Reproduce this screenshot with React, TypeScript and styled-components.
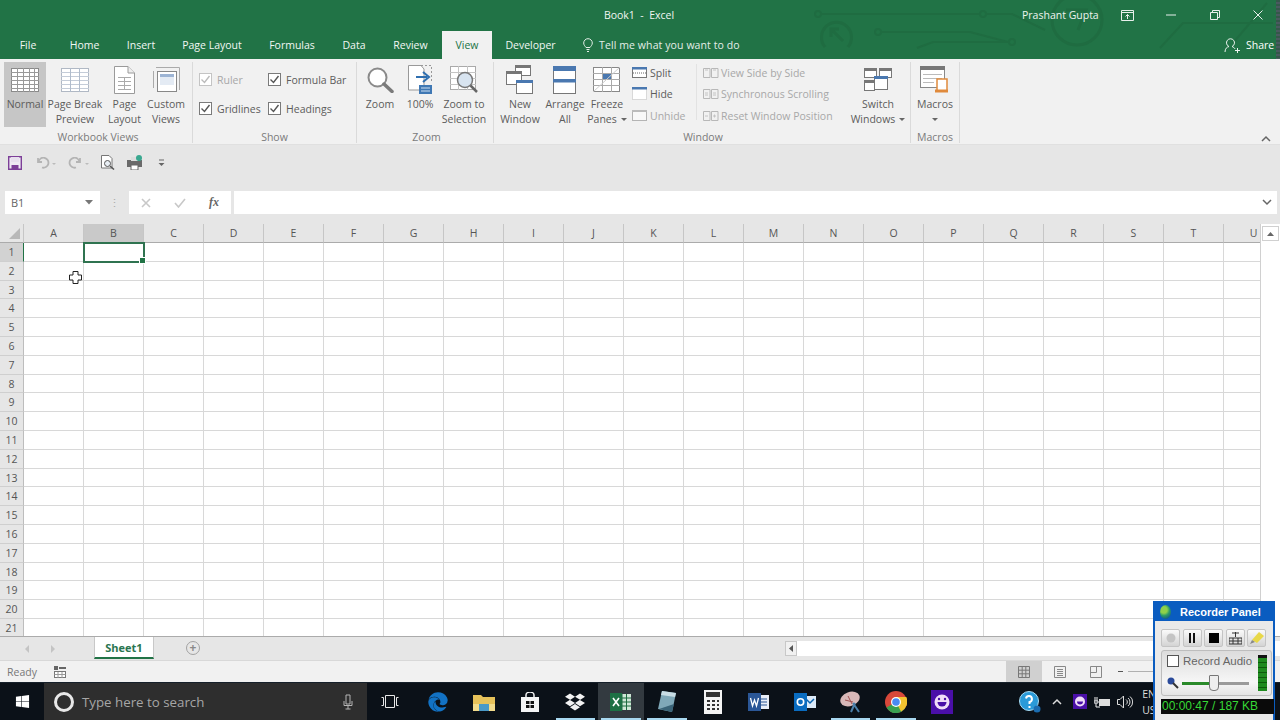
import * as React from "react"
import styled, { createGlobalStyle } from 'styled-components'
import { FaWindows, FaDropbox, FaEdge } from 'react-icons/fa'

const GlobalStyle = createGlobalStyle`
    html, body { margin: 0; padding: 0; background: #fff; }
    body { font-family: "Open Sans", "Noto Sans", "Liberation Sans", sans-serif; color: #444; }
    * { box-sizing: border-box; }
`

const Page = styled.div`
    position: relative;
    width: 1280px;
    height: 720px;
    overflow: hidden;
    display: flex;
    flex-direction: column;
`

/* ---------- title bar ---------- */
const GreenBar = styled.header`
    position: relative;
    height: 59px;
    background: #217346;
    color: #fff;
    font-size: 10.5px;
`
const Circuit = styled.svg`
    position: absolute;
    left: 0;
    top: 0;
`
const TitleRow = styled.div`
    position: relative;
    height: 31px;
    padding-bottom: 1px;
    display: flex;
    align-items: center;
`
const DocTitle = styled.div`
    width: 1278px;
    text-align: center;
    color: #f0f5f2;
    white-space: pre;
`
const UserName = styled.div`
    position: absolute;
    left: 1022px;
    top: 8px;
    color: #eef4f0;
`
const WindowControls = styled.div`
    position: absolute;
    left: 1106px;
    top: 0;
    height: 30px;
    display: flex;
`
const WindowControl = styled.div`
    width: 43.5px;
    height: 30px;
    display: flex;
    align-items: center;
    justify-content: center;
`
const TabRow = styled.nav`
    position: relative;
    height: 28px;
    display: flex;
`
const Tab = styled.div<{ $w: number; $active?: boolean }>`
    width: ${p => p.$w}px;
    height: 28px;
    padding-top: 7px;
    text-align: center;
    color: ${p => (p.$active ? '#217346' : '#f2f7f4')};
    background: ${p => (p.$active ? '#f1f1f1' : 'transparent')};
`
const TellMe = styled.div`
    margin-left: 14px;
    padding-top: 7px;
    display: flex;
    align-items: flex-start;
    gap: 6px;
    color: #e4eee8;
    letter-spacing: .1px;
`
const Share = styled.div`
    position: absolute;
    left: 1224px;
    top: 6px;
    display: flex;
    align-items: center;
    gap: 6px;
`
const EdgeNoise = styled.div`
    position: absolute;
    right: 0;
    top: 0;
    width: 4px;
    height: 59px;
    background: repeating-linear-gradient(180deg, #34584a 0 2px, #4a5a60 2px 4px);
`

/* ---------- ribbon ---------- */
const Ribbon = styled.section`
    position: relative;
    height: 86px;
    background: #f1f1f1;
    display: flex;
    border-bottom: 1px solid #e0e0e0;
`
const Group = styled.div<{ $w: number; $pad?: number }>`
    width: ${p => p.$w}px;
    height: 81px;
    margin-top: 3px;
    padding-left: ${p => p.$pad ?? 0}px;
    border-right: 1px solid #dadada;
    display: flex;
    flex-direction: column;
`
const GroupBody = styled.div`
    flex: none;
    height: 65px;
    display: flex;
`
const GroupLabel = styled.div`
    margin-top: 4px;
    font-size: 10.5px;
    line-height: 12px;
    text-align: center;
    color: #7b7b7b;
`
const BigButton = styled.div<{ $w: number; $on?: boolean }>`
    width: ${p => p.$w}px;
    height: 65px;
    background: ${p => (p.$on ? '#c6c6c6' : 'transparent')};
    display: flex;
    flex-direction: column;
    align-items: center;
    font-size: 10.5px;
    line-height: 15px;
    text-align: center;
    color: #5c5c5c;
    white-space: pre;
`
const BigIcon = styled.div`
    height: 35px;
    display: flex;
    align-items: center;
    justify-content: center;
`
const Caret = styled.span`
    display: inline-block;
    width: 0;
    height: 0;
    margin-left: 4px;
    vertical-align: 2px;
    border-left: 3px solid transparent;
    border-right: 3px solid transparent;
    border-top: 3px solid #666;
`
const LoneCaret = styled(Caret)`
    margin: 6px 0 0;
`
const CheckGrid = styled.div`
    display: grid;
    grid-template-columns: 69px 88px;
    grid-auto-rows: 29px;
    padding: 3px 0 0 6px;
`
const CheckItem = styled.div<{ $off?: boolean }>`
    display: flex;
    align-items: center;
    gap: 5px;
    font-size: 10.5px;
    color: ${p => (p.$off ? '#a8a8a8' : '#5c5c5c')};
    white-space: nowrap;
`
const Check = styled.span<{ $off?: boolean }>`
    width: 13px;
    height: 13px;
    flex: none;
    background: #fff;
    border: 1px solid ${p => (p.$off ? '#c4c4c4' : '#7a7a7a')};
    display: flex;
    align-items: center;
    justify-content: center;
`
const SmallColumn = styled.div<{ $w: number; $ml?: number }>`
    width: ${p => p.$w}px;
    margin-left: ${p => p.$ml ?? 0}px;
    display: flex;
    flex-direction: column;
`
const SmallItem = styled.div<{ $off?: boolean }>`
    height: 21.5px;
    display: flex;
    align-items: center;
    gap: 2px;
    font-size: 10.5px;
    color: ${p => (p.$off ? '#a8a8a8' : '#5c5c5c')};
    white-space: nowrap;
`
const SoftRule = styled.div`
    width: 1px;
    height: 56px;
    margin-top: 2px;
    background: #e2e2e2;
`
const Collapse = styled.svg`
    position: absolute;
    left: 1261px;
    top: 76px;
`

/* ---------- quick access and formula bar ---------- */
const QuickAccess = styled.div`
    height: 35px;
    background: #e6e6e6;
    display: flex;
    align-items: center;
    padding-left: 8px;
`
const QuickSlot = styled.div<{ $w: number }>`
    width: ${p => p.$w}px;
    display: flex;
    align-items: center;
`
const FormulaRow = styled.div`
    height: 44px;
    background: #e6e6e6;
    display: flex;
    padding: 11px 3px 10px 5px;
`
const NameBox = styled.div`
    width: 95px;
    background: #fff;
    display: flex;
    align-items: center;
    justify-content: space-between;
    padding: 0 7px 0 6px;
    font-size: 11px;
    color: #666;
`
const GripDots = styled.div`
    width: 29px;
    display: flex;
    justify-content: center;
    align-items: center;
    color: #aaa;
    font-size: 11px;
`
const FxBox = styled.div`
    width: 102px;
    background: #fff;
    display: flex;
    align-items: center;
    justify-content: space-between;
    padding: 0 12px;
`
const FxLabel = styled.span`
    font-family: "Liberation Serif", serif;
    font-style: italic;
    font-weight: bold;
    font-size: 12px;
    color: #666;
`
const FormulaInput = styled.div`
    flex: 1;
    margin-left: 3px;
    background: #fff;
    display: flex;
    align-items: center;
    justify-content: flex-end;
    padding-right: 5px;
`

/* ---------- sheet ---------- */
const SheetArea = styled.div`
    height: 412px;
    display: flex;
    background: #fff;
`
const SheetGrid = styled.div`
    width: 1260px;
    height: 412px;
    overflow: hidden;
    display: grid;
    grid-template-columns: 24px repeat(21, 60px);
    grid-template-rows: 19px repeat(21, 18.8px);
`
const Corner = styled.div`
    background: #e6e6e6;
    border-right: 1px solid #c6c6c6;
    border-bottom: 1px solid #ababab;
    display: flex;
    align-items: flex-end;
    justify-content: flex-end;
    padding: 0 3px 3px 0;
`
const ColHead = styled.div<{ $on?: boolean }>`
    background: ${p => (p.$on ? '#c9c9c9' : '#e6e6e6')};
    border-right: 1px solid #c6c6c6;
    border-bottom: 1px solid #ababab;
    font-size: 10.5px;
    line-height: 18px;
    text-align: center;
    color: #555;
`
const RowHead = styled.div<{ $on?: boolean }>`
    background: ${p => (p.$on ? '#d2d2d2' : '#e6e6e6')};
    border-right: ${p => (p.$on ? '1px solid #217346' : '1px solid #bdbdbd')};
    border-bottom: 1px solid #cfcfcf;
    font-size: 10.5px;
    text-align: center;
    line-height: 18.5px;
    color: #555;
`
const Cell = styled.div<{ $on?: boolean }>`
    position: relative;
    border-right: 1px solid #d8d8d8;
    border-bottom: 1px solid #d8d8d8;
    ${p => p.$on && `
        outline: 2px solid #2f7350;
        outline-offset: -1px;
        z-index: 1;
        &::after {
            content: '';
            position: absolute;
            right: -3px;
            bottom: -3px;
            width: 5px;
            height: 5px;
            background: #217346;
            border: 1px solid #fff;
        }
    `}
`
const VScroll = styled.div`
    width: 20px;
    border-left: 1px solid #d0d0d0;
    background: #fff;
`
const ScrollUp = styled.div`
    width: 17px;
    height: 15px;
    margin: 2px 0 0 1px;
    border: 1px solid #d0d0d0;
    display: flex;
    align-items: center;
    justify-content: center;
`
const CrossCursor = styled.svg`
    position: absolute;
    left: 69px;
    top: 271px;
    z-index: 2;
`

/* ---------- sheet tabs and status ---------- */
const TabsBar = styled.div`
    height: 24px;
    background: #e6e6e6;
    border-top: 1px solid #ababab;
    display: flex;
`
const SheetNav = styled.div`
    width: 94px;
    display: flex;
    padding-left: 25px;
    gap: 22px;
    align-items: center;
`
const NavArrow = styled.span<{ $right?: boolean }>`
    width: 0;
    height: 0;
    border-top: 4px solid transparent;
    border-bottom: 4px solid transparent;
    ${p => (p.$right ? 'border-left: 4px solid #c4c4c4;' : 'border-right: 4px solid #c4c4c4;')}
`
const SheetTab = styled.div`
    width: 60px;
    height: 22px;
    background: #fff;
    border-bottom: 2px solid #217346;
    border-left: 1px solid #c8c8c8;
    border-right: 1px solid #c8c8c8;
    text-align: center;
    font-size: 11px;
    line-height: 21px;
    font-weight: 700;
    color: #2a7550;
`
const AddSheet = styled.div`
    width: 14px;
    height: 14px;
    margin: 4px 0 0 32px;
    border: 1.5px solid #a2a2a2;
    border-radius: 50%;
    display: flex;
    align-items: center;
    justify-content: center;
    color: #8a8a8a;
    font-size: 12px;
    line-height: 10px;
    font-weight: 700;
`
const HScroll = styled.div`
    margin-left: auto;
    width: 495px;
    margin-top: 4px;
    height: 15px;
    background: #fff;
    display: flex;
`
const HScrollBtn = styled.div`
    width: 12px;
    height: 15px;
    background: #f1f1f1;
    border: 1px solid #c8c8c8;
    display: flex;
    align-items: center;
    justify-content: center;
`
const StatusBar = styled.div`
    height: 22px;
    background: #f1f1f1;
    border-top: 1px solid #d8d8d8;
    display: flex;
    align-items: center;
    font-size: 10.5px;
    color: #777;
    padding-left: 7px;
`
const StatusMacro = styled.div`
    margin-left: 17px;
    display: flex;
`
const ViewButtons = styled.div`
    margin-left: auto;
    display: flex;
    align-items: center;
    width: 274px;
`
const ViewButton = styled.div<{ $on?: boolean }>`
    width: 36px;
    height: 21px;
    background: ${p => (p.$on ? '#d0d0d0' : 'transparent')};
    display: flex;
    align-items: center;
    justify-content: center;
`
const ZoomMinus = styled.div`
    width: 5px;
    height: 1px;
    margin-left: 4px;
    background: #555;
`
const ZoomTrack = styled.div`
    width: 30px;
    height: 1px;
    margin-left: 5px;
    background: #b0b0b0;
`

/* ---------- taskbar ---------- */
const Taskbar = styled.footer`
    height: 38px;
    background: #0b1118;
    display: flex;
    border-top: 1px solid #16202a;
`
const StartSlot = styled.div`
    width: 44px;
    display: flex;
    align-items: center;
    justify-content: center;
    color: #fff;
`
const SearchBox = styled.div`
    width: 323px;
    background: #2e2e2e;
    display: flex;
    align-items: center;
    padding: 0 14px 0 10px;
    color: #a6a6a6;
    font-size: 13.3px;
`
const Cortana = styled.span`
    width: 20px;
    height: 20px;
    margin-right: 8px;
    border: 3px solid #e8e8e8;
    border-radius: 50%;
`
const SearchText = styled.span`
    flex: 1;
`
const TaskView = styled.div`
    width: 48px;
    padding-right: 2px;
    display: flex;
    align-items: center;
    justify-content: center;
`
const TaskSlot = styled.div<{ $active?: boolean; $open?: boolean }>`
    position: relative;
    width: 45.85px;
    display: flex;
    align-items: center;
    justify-content: center;
    background: ${p => (p.$active ? '#333a40' : 'transparent')};
    ${p => p.$open && `
        &::after {
            content: '';
            position: absolute;
            left: 3px;
            right: 3px;
            bottom: 0;
            height: 2px;
            background: #a8d8f0;
        }
    `}
`
const Tray = styled.div`
    margin-left: 49px;
    display: flex;
    align-items: center;
`
const TraySlot = styled.div<{ $w: number }>`
    width: ${p => p.$w}px;
    display: flex;
    align-items: center;
    justify-content: center;
`
const Lang = styled.div`
    font-size: 10.5px;
    line-height: 16px;
    color: #ddd;
    padding-left: 6px;
    white-space: pre;
`

/* ---------- recorder panel ---------- */
const Recorder = styled.aside`
    position: absolute;
    left: 1153px;
    top: 601px;
    width: 122px;
    height: 119px;
    background: #e9e9e9;
    border: 2px solid #0a5cc0;
    border-bottom: 0;
    z-index: 3;
    font-family: "Liberation Sans", sans-serif;
`
const RecorderTitle = styled.div`
    height: 18px;
    background: #0a5cc0;
    color: #fff;
    font-weight: 700;
    font-size: 11px;
    display: flex;
    align-items: center;
    padding-left: 5px;
    gap: 9px;
`
const Globe = styled.span`
    width: 11px;
    height: 14px;
    border-radius: 50%;
    background: radial-gradient(circle at 35% 35%, #8ed04a 0 28%, #2a9a6a 50%, #0a3c90 100%);
`
const RecorderTools = styled.div`
    display: flex;
    gap: 2.5px;
    padding: 8px 0 0 6px;
`
const ToolButton = styled.div`
    width: 19px;
    height: 18px;
    background: linear-gradient(#fafafa, #d4d4d4);
    border: 1px solid #c4c4c4;
    border-radius: 2px;
    display: flex;
    align-items: center;
    justify-content: center;
`
const AudioBox = styled.div`
    height: 46px;
    margin: 3px 1px 0 6px;
    background: linear-gradient(#dcdcdc, #f6f6f6 70%, #e4e4e4);
    border: 1px solid #bdbdbd;
    border-radius: 3px;
    display: flex;
    padding: 4px 4px 4px 5px;
`
const AudioMain = styled.div`
    flex: 1;
    display: flex;
    flex-direction: column;
    justify-content: space-between;
`
const AudioLabel = styled.div`
    display: flex;
    align-items: center;
    gap: 4px;
    font-size: 11.5px;
    color: #666;
    white-space: nowrap;
`
const AudioCheck = styled.span`
    flex: none;
    width: 12px;
    height: 12px;
    background: #fff;
    border: 1px solid #555;
`
const AudioSlider = styled.div`
    display: flex;
    align-items: center;
    gap: 3px;
    height: 16px;
`
const SliderTrack = styled.div`
    position: relative;
    width: 67px;
    height: 3px;
    background: linear-gradient(90deg, #2a8a2a 0 45%, #9a9a9a 45%);
`
const SliderThumb = styled.span`
    position: absolute;
    left: 27px;
    top: -7px;
    width: 10px;
    height: 16px;
    background: #eee;
    border: 1px solid #777;
    border-radius: 1px 1px 4px 4px;
`
const Meter = styled.div`
    width: 9px;
    margin-left: 2px;
    background: repeating-linear-gradient(180deg, #1f8a1f 0 4px, #0d5a0d 4px 5px);
    border-top: 3px solid #111;
`
const Timer = styled.div`
    margin: 3px 0 0 6px;
    width: 113px;
    height: 15px;
    background: #0a0a0a;
    color: #36d936;
    font-size: 12px;
    line-height: 15px;
    padding-left: 1px;
    white-space: pre;
    overflow: hidden;
`

/* ---------- drawings ---------- */
const SheetIcon = ({ dark }: { dark?: boolean }) => (
    <svg width="28" height="24" viewBox="0 0 28 24">
        <rect x=".5" y=".5" width="27" height="23" fill="#fff" stroke={dark ? '#8a8a8a' : '#b0b8c4'} />
        {[4, 8, 12, 16, 20].map(y => <path key={y} d={`M0 ${y + .5}H28`} stroke={dark ? '#999' : '#c4ccd8'} />)}
        {(dark ? [6, 12, 18, 23] : [9, 18]).map(x => <path key={x} d={`M${x + .5} 0V24`} stroke={dark ? '#999' : '#b0bccc'} />)}
    </svg>
)
const PageIcon = () => (
    <svg width="21" height="28" viewBox="0 0 21 28">
        <path d="M.5.5H14L20.500 7V27.500H.5Z" fill="#fff" stroke="#9a9a9a" />
        <path d="M14 .5V7H20.500" fill="#eee" stroke="#9a9a9a" />
        <path d="M4 11.500H17M4 15.500H17M4 19.500H17M4 23.500H17M10.500 11V24" stroke="#aaa" />
    </svg>
)
const CustomIcon = () => (
    <svg width="27" height="26" viewBox="0 0 27 26">
        <path d="M3 .5H26.500V23M.5 4V21" fill="none" stroke="#aaa" />
        <rect x="4.500" y="4.500" width="19" height="20" fill="#fff" stroke="#888" />
        <rect x="7" y="7" width="14" height="3" fill="#9db4d4" />
        <rect x="7" y="10" width="14" height="8" fill="#e4ebf4" />
    </svg>
)
const ZoomIcon = () => (
    <svg width="27" height="26" viewBox="0 0 27 26">
        <circle cx="10.500" cy="10.500" r="9" fill="#fff" stroke="#8a8a8a" strokeWidth="2" />
        <path d="M17 17L25 24.500" stroke="#7a7a7a" strokeWidth="3.500" strokeLinecap="round" />
    </svg>
)
const HundredIcon = () => (
    <svg width="24" height="29" viewBox="0 0 24 29">
        <path d="M.5.5H13L16 4V25H.5Z" fill="#fff" stroke="#999" />
        <path d="M13 .5H23.500V17" fill="none" stroke="#999" strokeDasharray="2 2" />
        <path d="M8 12H19M15 7L21 12L15 17" fill="none" stroke="#2f6fb0" strokeWidth="2" />
        <rect x="11" y="20" width="13" height="9" fill="#3f78b4" />
        <path d="M13 23H22M13 26H22" stroke="#cfe0f2" />
    </svg>
)
const ZoomSelIcon = () => (
    <svg width="29" height="27" viewBox="0 0 29 27">
        <rect x=".5" y=".5" width="25" height="23" fill="#fff" stroke="#aaa" />
        <path d="M0 6.500H26M0 12.500H26M0 18.500H26M8.500 0V24M17.500 0V24" stroke="#c4c4c4" />
        <circle cx="15" cy="14" r="7.500" fill="#d8e4f0" stroke="#777" strokeWidth="1.500" />
        <path d="M20.500 19.500L27 26" stroke="#666" strokeWidth="2.500" />
    </svg>
)
const Win = ({ x, y, w, h, bar = '#777' }: { x: number; y: number; w: number; h: number; bar?: string }) => (
    <g>
        <rect x={x + .5} y={y + .5} width={w} height={h} fill="#fff" stroke="#777" />
        <rect x={x} y={y} width={w + 1} height="3" fill={bar} />
    </g>
)
const NewWindowIcon = () => (
    <svg width="28" height="30" viewBox="0 0 28 30">
        <Win x={9} y={0} w={15} h={10} />
        <Win x={0} y={6} w={15} h={13} />
        <Win x={10} y={15} w={16} h={13} bar="#4a78b0" />
    </svg>
)
const ArrangeIcon = () => (
    <svg width="24" height="28" viewBox="0 0 24 28">
        <rect x=".5" y=".5" width="22" height="27" fill="#fff" stroke="#777" />
        <rect x="0" y="0" width="23" height="5" fill="#4a78b0" />
        <rect x="0" y="13" width="23" height="3.500" fill="#4a78b0" />
    </svg>
)
const FreezeIcon = () => (
    <svg width="28" height="26" viewBox="0 0 28 26">
        <rect x=".5" y=".5" width="26" height="24" fill="#fff" stroke="#888" />
        <path d="M0 6.500H27M0 12.500H27M0 18.500H27M9.500 0V25M18.500 0V25" stroke="#aaa" />
        <rect x="10" y="7" width="8" height="5" fill="#4a78b0" />
        <path d="M0 25L27 0" stroke="#ccc" />
    </svg>
)
const SplitIcon = () => (
    <svg width="16" height="12" viewBox="0 0 16 12">
        <rect x=".5" y=".5" width="14" height="10" fill="#fff" stroke="#777" />
        <rect x="0" y="0" width="15" height="2.500" fill="#4a78b0" />
        <path d="M1 6H14" stroke="#666" strokeDasharray="1 1" />
    </svg>
)
const HideIcon = () => (
    <svg width="16" height="14" viewBox="0 0 16 14">
        <rect x=".5" y="1.500" width="14" height="11" fill="#fff" stroke="#bbb" strokeDasharray="1 1" />
        <rect x="0" y="0" width="15" height="2.500" fill="#4a78b0" />
    </svg>
)
const UnhideIcon = () => (
    <svg width="16" height="12" viewBox="0 0 16 12">
        <rect x=".5" y=".5" width="14" height="10" fill="#f8f8f8" stroke="#b4b4b4" />
        <rect x="0" y="0" width="15" height="2" fill="#bbb" />
    </svg>
)
const FadedDocs = ({ mark }: { mark: string }) => (
    <svg width="16" height="12" viewBox="0 0 16 12">
        <path d="M.5 1.500H7V10.500H.5ZM8.500 1.500H15V10.500H8.500Z" fill="none" stroke="#b8b8b8" />
        <path d={mark} fill="none" stroke="#c4c4c4" />
    </svg>
)
const SwitchIcon = () => (
    <svg width="28" height="24" viewBox="0 0 28 24">
        <Win x={0} y={0} w={12} h={9} />
        <Win x={15} y={0} w={12} h={9} />
        <Win x={0} y={12} w={10} h={10} />
        <Win x={10} y={8} w={13} h={13} bar="#4a78b0" />
    </svg>
)
const MacroIcon = () => (
    <svg width="30" height="28" viewBox="0 0 30 28">
        <rect x=".5" y=".5" width="24" height="21" fill="#fff" stroke="#888" />
        <rect x="0" y="0" width="25" height="4" fill="#777" />
        <path d="M3 8.500H22M3 12.500H22M3 16.500H14" stroke="#bbb" />
        <rect x="17" y="13" width="10" height="12" fill="#fff" stroke="#e08a3c" strokeWidth="1.500" />
        <path d="M15 25H28" stroke="#e08a3c" strokeWidth="3" />
    </svg>
)
const Tick = ({ off }: { off?: boolean }) => (
    <svg width="11" height="11" viewBox="0 0 11 11">
        <path d="M1.500 5.500L4.500 8.500L9.500 2" fill="none" stroke={off ? '#bbb' : '#555'} strokeWidth="1.400" />
    </svg>
)
const SmallChevron = ({ up, color = '#666' }: { up?: boolean; color?: string }) => (
    <svg width="10" height="7" viewBox="0 0 10 7">
        <path d={up ? 'M1 6L5 2L9 6' : 'M1 1L5 5L9 1'} fill="none" stroke={color} strokeWidth="1.500" />
    </svg>
)

const CircuitLines = () => (
    <Circuit width="1280" height="59" viewBox="0 0 1280 59">
        <g fill="none" stroke="#1f6c41" strokeWidth="2">
            <circle cx="818" cy="14" r="3" />
            <path d="M821 14H980" />
            <circle cx="983" cy="14" r="3" />
            <path d="M986 14H1012L1045 30" />
            <path d="M825 47A15 15 0 1 1 848 47" strokeWidth="3" />
            <path d="M843 41L831 29M831 37V29H839" strokeWidth="3" />
            <circle cx="878" cy="32" r="3" />
            <path d="M881 32H970L1008 42" />
            <circle cx="1012" cy="42" r="3" />
            <path d="M917 48L933 42H1009" />
            <circle cx="1077" cy="20" r="25" strokeWidth="3" />
            <path d="M1066 10H1086L1078 30" strokeWidth="3" />
            <path d="M1160 48L1183 23H1273" />
            <path d="M1233 43L1267 3" />
        </g>
    </Circuit>
)

const columns = 'ABCDEFGHIJKLMNOPQRSTU'.split('')
const rows = Array.from({ length: 21 }, (_, i) => i + 1)
const tabs: [string, number][] = [
    ['File', 56], ['Home', 57], ['Insert', 56], ['Page Layout', 86], ['Formulas', 74], ['Data', 50], ['Review', 63],
]

const App = () => (
    <Page>
        <GlobalStyle />
        <GreenBar>
            <CircuitLines />
            <TitleRow>
                <DocTitle>Book1  -  Excel</DocTitle>
                <UserName>Prashant Gupta</UserName>
                <WindowControls>
                    <WindowControl>
                        <svg width="13" height="11" viewBox="0 0 13 11"><path d="M.5.5H12.500V10.500H.5ZM1 2.500H12M6.500 9V4.500M4.500 6.500L6.500 4.500L8.500 6.500" fill="none" stroke="#e8f0ec" /></svg>
                    </WindowControl>
                    <WindowControl>
                        <svg width="10" height="2" viewBox="0 0 10 2"><path d="M0 1H10" stroke="#e8f0ec" /></svg>
                    </WindowControl>
                    <WindowControl>
                        <svg width="10" height="10" viewBox="0 0 10 10"><path d="M2.500 2.500V.5H9.500V7.500H7.500M.5 2.500H7.500V9.500H.5Z" fill="none" stroke="#e8f0ec" /></svg>
                    </WindowControl>
                    <WindowControl>
                        <svg width="10" height="10" viewBox="0 0 10 10"><path d="M.5.5L9.500 9.500M9.500.5L.5 9.500" stroke="#e8f0ec" /></svg>
                    </WindowControl>
                </WindowControls>
            </TitleRow>
            <TabRow>
                {tabs.map(([name, w]) => <Tab key={name} $w={w}>{name}</Tab>)}
                <Tab $w={50} $active>View</Tab>
                <Tab $w={77}>Developer</Tab>
                <TellMe>
                    <svg width="10" height="14" viewBox="0 0 10 14"><path d="M3 9.500C2 8 .7 7 .7 5A4.300 4.300 0 0 1 9.300 5C9.300 7 8 8 7 9.500ZM3.500 11.500H6.500M4 13.500H6" fill="none" stroke="#e4eee8" /></svg>
                    Tell me what you want to do
                </TellMe>
                <Share>
                    <svg width="16" height="16" viewBox="0 0 16 16"><path d="M1 15C1 11.500 3 10 5 9.500A4 4 0 1 1 8 9.500C9.500 10 10.500 11 11 12M11 13.500H16M13.500 11V16" fill="none" stroke="#eef4f0" /></svg>
                    Share
                </Share>
            </TabRow>
            <EdgeNoise />
        </GreenBar>

        <Ribbon>
            <Group $w={193} $pad={4}>
                <GroupBody>
                    <BigButton $w={42} $on>
                        <BigIcon><SheetIcon dark /></BigIcon>Normal
                    </BigButton>
                    <BigButton $w={58}>
                        <BigIcon><SheetIcon /></BigIcon>{'Page Break\nPreview'}
                    </BigButton>
                    <BigButton $w={41}>
                        <BigIcon><PageIcon /></BigIcon>{'Page\nLayout'}
                    </BigButton>
                    <BigButton $w={42}>
                        <BigIcon><CustomIcon /></BigIcon>{'Custom\nViews'}
                    </BigButton>
                </GroupBody>
                <GroupLabel>Workbook Views</GroupLabel>
            </Group>
            <Group $w={164}>
                <GroupBody>
                    <CheckGrid>
                        <CheckItem $off><Check $off><Tick off /></Check>Ruler</CheckItem>
                        <CheckItem><Check><Tick /></Check>Formula Bar</CheckItem>
                        <CheckItem><Check><Tick /></Check>Gridlines</CheckItem>
                        <CheckItem><Check><Tick /></Check>Headings</CheckItem>
                    </CheckGrid>
                </GroupBody>
                <GroupLabel>Show</GroupLabel>
            </Group>
            <Group $w={137} $pad={3}>
                <GroupBody>
                    <BigButton $w={40}>
                        <BigIcon><ZoomIcon /></BigIcon>Zoom
                    </BigButton>
                    <BigButton $w={40}>
                        <BigIcon><HundredIcon /></BigIcon>100%
                    </BigButton>
                    <BigButton $w={48}>
                        <BigIcon><ZoomSelIcon /></BigIcon>{'Zoom to\nSelection'}
                    </BigButton>
                </GroupBody>
                <GroupLabel>Zoom</GroupLabel>
            </Group>
            <Group $w={417} $pad={2}>
                <GroupBody>
                    <BigButton $w={48}>
                        <BigIcon><NewWindowIcon /></BigIcon>{'New\nWindow'}
                    </BigButton>
                    <BigButton $w={42}>
                        <BigIcon><ArrangeIcon /></BigIcon>{'Arrange\nAll'}
                    </BigButton>
                    <BigButton $w={42}>
                        <BigIcon><FreezeIcon /></BigIcon>
                        <span>Freeze{'\n'}Panes<Caret /></span>
                    </BigButton>
                    <SmallColumn $w={64} $ml={4}>
                        <SmallItem><SplitIcon />Split</SmallItem>
                        <SmallItem><HideIcon />Hide</SmallItem>
                        <SmallItem $off><UnhideIcon />Unhide</SmallItem>
                    </SmallColumn>
                    <SoftRule />
                    <SmallColumn $w={146} $ml={6}>
                        <SmallItem $off><FadedDocs mark="M2 3H5M10 3H13" />View Side by Side</SmallItem>
                        <SmallItem $off><FadedDocs mark="M2 5H5M2 7H5M10 5H13M10 7H13" />Synchronous Scrolling</SmallItem>
                        <SmallItem $off><FadedDocs mark="M2 6H5M10 6H13M11.500 4.500V7.500" />Reset Window Position</SmallItem>
                    </SmallColumn>
                    <BigButton $w={58}>
                        <BigIcon><SwitchIcon /></BigIcon>
                        <span>Switch{'\n'}Windows<Caret /></span>
                    </BigButton>
                </GroupBody>
                <GroupLabel>Window</GroupLabel>
            </Group>
            <Group $w={49}>
                <GroupBody>
                    <BigButton $w={48}>
                        <BigIcon><MacroIcon /></BigIcon>
                        Macros
                        <LoneCaret />
                    </BigButton>
                </GroupBody>
                <GroupLabel>Macros</GroupLabel>
            </Group>
            <Collapse width="10" height="7" viewBox="0 0 10 7"><path d="M1 6L5 2L9 6" fill="none" stroke="#666" strokeWidth="1.500" /></Collapse>
        </Ribbon>

        <QuickAccess>
            <QuickSlot $w={27}>
                <svg width="14" height="14" viewBox="0 0 14 14"><path d="M.7.7H13.300V13.300H.7Z" fill="#efeaf3" stroke="#7d3f98" strokeWidth="1.400" /><path d="M3 1H11V6H3Z" fill="#e8e0ee" /><rect x="3.500" y="9" width="7" height="4" fill="#7d3f98" /></svg>
            </QuickSlot>
            <QuickSlot $w={33}>
                <svg width="22" height="12" viewBox="0 0 22 12"><path d="M3 1V5H7M3.500 5A5 5 0 1 1 7 10.500" fill="none" stroke="#b4b4b4" strokeWidth="1.800" /><path d="M17 6H21L19 8Z" fill="#bbb" /></svg>
            </QuickSlot>
            <QuickSlot $w={33}>
                <svg width="22" height="12" viewBox="0 0 22 12"><path d="M12 1V5H8M11.500 5A5 5 0 1 0 8 10.500" fill="none" stroke="#b4b4b4" strokeWidth="1.800" /><path d="M17 6H21L19 8Z" fill="#bbb" /></svg>
            </QuickSlot>
            <QuickSlot $w={26}>
                <svg width="14" height="15" viewBox="0 0 14 15"><path d="M.5.5H8L11 3.500V13H.5Z" fill="#fff" stroke="#777" /><circle cx="6.500" cy="8.500" r="3" fill="#e8eef4" stroke="#555" /><path d="M9 11L13 14.500" stroke="#555" strokeWidth="1.500" /></svg>
            </QuickSlot>
            <QuickSlot $w={31}>
                <svg width="16" height="15" viewBox="0 0 16 15"><rect x="0" y="5" width="15" height="7" fill="#6a6a6a" /><rect x="4" y="2" width="7" height="4" fill="#ddd" /><rect x="4" y="10" width="7" height="5" fill="#fff" stroke="#666" /><circle cx="12" cy="3" r="3" fill="#3aa890" /></svg>
            </QuickSlot>
            <QuickSlot $w={12}>
                <svg width="7" height="8" viewBox="0 0 7 8"><path d="M1 1H6" stroke="#666" /><path d="M.5 4H6.500L3.500 7Z" fill="#666" /></svg>
            </QuickSlot>
        </QuickAccess>

        <FormulaRow>
            <NameBox>B1<svg width="8" height="5" viewBox="0 0 8 5"><path d="M0 0H8L4 4.500Z" fill="#777" /></svg></NameBox>
            <GripDots>⋮</GripDots>
            <FxBox>
                <svg width="10" height="10" viewBox="0 0 10 10"><path d="M1 1L9 9M9 1L1 9" stroke="#c8c8c8" strokeWidth="1.600" /></svg>
                <svg width="12" height="10" viewBox="0 0 12 10"><path d="M1 5L4.500 9L11 1" fill="none" stroke="#c8c8c8" strokeWidth="1.600" /></svg>
                <FxLabel>fx</FxLabel>
            </FxBox>
            <FormulaInput><SmallChevron /></FormulaInput>
        </FormulaRow>

        <SheetArea>
            <SheetGrid>
                <Corner><svg width="11" height="11" viewBox="0 0 11 11"><path d="M11 0V11H0Z" fill="#b8b8b8" /></svg></Corner>
                {columns.map(c => <ColHead key={c} $on={c === 'B'}>{c}</ColHead>)}
                {rows.map(r => (
                    <React.Fragment key={r}>
                        <RowHead $on={r === 1}>{r}</RowHead>
                        {columns.map(c => <Cell key={c} $on={r === 1 && c === 'B'} />)}
                    </React.Fragment>
                ))}
            </SheetGrid>
            <VScroll>
                <ScrollUp><svg width="7" height="4" viewBox="0 0 7 4"><path d="M0 4L3.500 0L7 4Z" fill="#666" /></svg></ScrollUp>
            </VScroll>
        </SheetArea>

        <TabsBar>
            <SheetNav><NavArrow /><NavArrow $right /></SheetNav>
            <SheetTab>Sheet1</SheetTab>
            <AddSheet>+</AddSheet>
            <HScroll>
                <HScrollBtn><svg width="4" height="7" viewBox="0 0 4 7"><path d="M4 0V7L0 3.500Z" fill="#555" /></svg></HScrollBtn>
            </HScroll>
        </TabsBar>

        <StatusBar>
            Ready
            <StatusMacro>
                <svg width="12" height="12" viewBox="0 0 12 12"><rect x="0" y="0" width="4" height="4" fill="#666" /><path d="M5 1H12V3H5Z" fill="#666" /><rect x=".5" y="5.500" width="11" height="6" fill="#fff" stroke="#777" /><path d="M.5 8.500H11.500M4 6V12M8 6V12" stroke="#999" /></svg>
            </StatusMacro>
            <ViewButtons>
                <ViewButton $on>
                    <svg width="12" height="12" viewBox="0 0 12 12"><path d="M.5.5H11.500V11.500H.5ZM.5 4.200H11.500M.5 7.800H11.500M4.200.5V11.500M7.800.5V11.500" fill="none" stroke="#777" /></svg>
                </ViewButton>
                <ViewButton>
                    <svg width="12" height="12" viewBox="0 0 12 12"><path d="M.5.5H11.500V11.500H.5ZM3 3.500H9M3 5.500H9M3 7.500H9M3 9.500H9" fill="none" stroke="#888" /></svg>
                </ViewButton>
                <ViewButton>
                    <svg width="12" height="12" viewBox="0 0 12 12"><path d="M.5.5H11.500V11.500H.5ZM.5 6.500H6.500V.5" fill="none" stroke="#888" /></svg>
                </ViewButton>
                <ZoomMinus />
                <ZoomTrack />
            </ViewButtons>
        </StatusBar>

        <Taskbar>
            <StartSlot><FaWindows size={15} /></StartSlot>
            <SearchBox>
                <Cortana />
                <SearchText>Type here to search</SearchText>
                <svg width="10" height="16" viewBox="0 0 10 16"><path d="M3 1H7V10H3ZM1 7V11.500H9V7M5 11.500V15M2.500 15H7.500" fill="none" stroke="#b4b4b4" /></svg>
            </SearchBox>
            <TaskView>
                <svg width="18" height="13" viewBox="0 0 18 13"><path d="M4.500.5H13.500V12.500H4.500ZM.5 2.500H2.500V10.500H.5M17.500 2.500H15.500V10.500H17.500" fill="none" stroke="#e8e8e8" /></svg>
            </TaskView>
            <TaskSlot><FaEdge size={20} color="#1272c4" /></TaskSlot>
            <TaskSlot>
                <svg width="22" height="18" viewBox="0 0 22 18"><path d="M0 2H8L10 4H22V18H0Z" fill="#e6c25a" /><rect x="0" y="11" width="22" height="7" fill="#f2dc8c" /><rect x="6" y="11" width="10" height="7" fill="#4a9ac8" /></svg>
            </TaskSlot>
            <TaskSlot>
                <svg width="18" height="20" viewBox="0 0 18 20"><path d="M0 5H18V20H0Z" fill="#f4f4f4" /><path d="M5 5V3A4 3 0 0 1 13 3V5" fill="none" stroke="#f4f4f4" strokeWidth="1.500" /><path d="M5 9H8.500V12H5ZM9.500 9H13V12H9.500ZM5 13H8.500V16H5ZM9.500 13H13V16H9.500Z" fill="#111" /></svg>
            </TaskSlot>
            <TaskSlot $open><FaDropbox size={20} color="#f2f2f2" /></TaskSlot>
            <TaskSlot $active $open>
                <svg width="22" height="20" viewBox="0 0 22 20"><rect x="8" y="2" width="13" height="16" fill="#cfe6d6" /><path d="M12 2V18M16.500 2V18M8 6H21M8 10H21M8 14H21" stroke="#1d6b3f" /><rect x="0" y="1" width="12" height="18" fill="#1d7044" /><path d="M3 6L9 14M9 6L3 14" stroke="#fff" strokeWidth="1.600" /></svg>
            </TaskSlot>
            <TaskSlot $open>
                <svg width="20" height="24" viewBox="0 0 20 24"><path d="M5 1L19 3L15 22L1 19Z" fill="#7fa8b8" /><path d="M5 1L19 3L18 7L4 5Z" fill="#c8dce4" /><path d="M2 19L15 22L17 14Z" fill="#3a6478" /></svg>
            </TaskSlot>
            <TaskSlot>
                <svg width="18" height="24" viewBox="0 0 18 24"><rect width="18" height="24" fill="#f4f4f4" /><rect x="2" y="2" width="14" height="5" fill="#333" /><path d="M3 11H6M8 11H11M13 11H15M3 15H6M8 15H11M13 15H15M3 19H6M8 19H11M13 19H15" stroke="#333" strokeWidth="2" /></svg>
            </TaskSlot>
            <TaskSlot>
                <svg width="22" height="20" viewBox="0 0 22 20"><rect x="8" y="3" width="13" height="14" fill="#e8eef8" /><path d="M11 7H19M11 10H19M11 13H19" stroke="#2b5797" /><rect x="0" y="1" width="13" height="18" fill="#2b5797" /><path d="M2.500 6L4.500 14L6.500 8L8.500 14L10.500 6" fill="none" stroke="#fff" strokeWidth="1.300" /></svg>
            </TaskSlot>
            <TaskSlot>
                <svg width="22" height="20" viewBox="0 0 22 20"><rect x="10" y="4" width="12" height="12" fill="#dceaf8" /><path d="M12 7L16 11L20 7" fill="none" stroke="#0a64b0" strokeWidth="1.500" /><rect x="0" y="1" width="13" height="18" fill="#0a6cc0" /><circle cx="6.500" cy="10" r="3.200" fill="none" stroke="#fff" strokeWidth="1.600" /></svg>
            </TaskSlot>
            <TaskSlot $open>
                <svg width="24" height="24" viewBox="0 0 24 24"><ellipse cx="11" cy="9" rx="10" ry="7" fill="#d8b8b8" transform="rotate(-20 11 9)" /><path d="M6 10L14 12M9 6L13 14" stroke="#a05050" /><path d="M14 13L20 22M16 13L12 22" stroke="#4a7ea8" strokeWidth="2" /></svg>
            </TaskSlot>
            <TaskSlot $open>
                <svg width="22" height="22" viewBox="0 0 22 22"><circle cx="11" cy="11" r="11" fill="#d8483a" /><path d="M11 11L20.500 16.500A11 11 0 0 1 5 20.300Z" fill="#3aa050" /><path d="M11 11L1.500 16.500A11 11 0 0 0 11 22L15 11Z" fill="#3aa050" /><path d="M11 6H21.300A11 11 0 0 1 16 20.500L11 11Z" fill="#f4c430" /><circle cx="11" cy="11" r="5" fill="#fff" /><circle cx="11" cy="11" r="3.800" fill="#4a8af4" /></svg>
            </TaskSlot>
            <TaskSlot>
                <svg width="22" height="24" viewBox="0 0 22 24"><rect width="22" height="24" fill="#4a0fa8" /><circle cx="11" cy="12" r="7.500" fill="#f0dcf8" /><path d="M6.500 12H15.500A4.500 4.500 0 0 1 6.500 12Z" fill="#4a0fa8" /><circle cx="8" cy="9" r="1.200" fill="#4a0fa8" /><circle cx="14" cy="9" r="1.200" fill="#4a0fa8" /></svg>
            </TaskSlot>
            <Tray>
                <TraySlot $w={32}>
                    <svg width="22" height="22" viewBox="0 0 22 22"><circle cx="10" cy="10" r="9.500" fill="#2a9ad8" stroke="#a8dcf4" /><path d="M7 7.500A3 3 0 1 1 10.500 11V13M10.500 15V17" fill="none" stroke="#fff" strokeWidth="2" /><circle cx="18" cy="18" r="3.500" fill="#1a6cb0" /></svg>
                </TraySlot>
                <TraySlot $w={22}><SmallChevron up color="#ddd" /></TraySlot>
                <TraySlot $w={23}>
                    <svg width="14" height="15" viewBox="0 0 14 15"><rect width="14" height="15" fill="#4a0fa8" /><circle cx="7" cy="7.500" r="5" fill="#f0dcf8" /><path d="M4 7.500H10A3 3 0 0 1 4 7.500Z" fill="#4a0fa8" /></svg>
                </TraySlot>
                <TraySlot $w={22}>
                    <svg width="17" height="12" viewBox="0 0 17 12"><rect x="5" y="3" width="11" height="7" fill="#ddd" /><path d="M1 1V5M3 1V5M0 5H4V7H0ZM2 7V11H6" fill="none" stroke="#eee" /></svg>
                </TraySlot>
                <TraySlot $w={23}>
                    <svg width="16" height="14" viewBox="0 0 16 14"><path d="M.5 4.500H3L6.500 1V13L3 9.500H.5ZM9 4.500A3 3 0 0 1 9 9.500M11 3A5 5 0 0 1 11 11M13 1.500A7 7 0 0 1 13 12.500" fill="none" stroke="#ddd" /></svg>
                </TraySlot>
                <Lang>{'EN\nUS'}</Lang>
            </Tray>
        </Taskbar>

        <CrossCursor width="13" height="13" viewBox="0 0 13 13">
            <path d="M4 .5H9V4H12.500V9H9V12.500H4V9H.5V4H4Z" fill="#fff" stroke="#222" />
        </CrossCursor>

        <Recorder>
            <RecorderTitle><Globe />Recorder Panel</RecorderTitle>
            <RecorderTools>
                <ToolButton><svg width="10" height="10" viewBox="0 0 10 10"><circle cx="5" cy="5" r="4.500" fill="#c4c4c4" /></svg></ToolButton>
                <ToolButton><svg width="8" height="10" viewBox="0 0 8 10"><path d="M1 0H3V10H1ZM5 0H7V10H5Z" fill="#111" /></svg></ToolButton>
                <ToolButton><svg width="10" height="10" viewBox="0 0 10 10"><rect width="10" height="10" fill="#000" /></svg></ToolButton>
                <ToolButton><svg width="13" height="13" viewBox="0 0 13 13"><path d="M6.500 0V5M3 1H10M0 6H13V12H0ZM0 9H13M4 6V12M9 6V12" fill="none" stroke="#333" /></svg></ToolButton>
                <ToolButton><svg width="14" height="13" viewBox="0 0 14 13"><path d="M9 0L14 4L7 11L2 8Z" fill="#e8d848" /><path d="M2 8L0 12L5 10" fill="#888" /></svg></ToolButton>
            </RecorderTools>
            <AudioBox>
                <AudioMain>
                    <AudioLabel><AudioCheck />Record Audio</AudioLabel>
                    <AudioSlider>
                        <svg width="12" height="12" viewBox="0 0 12 12"><circle cx="4" cy="4" r="3.500" fill="#2a4a9a" /><path d="M6 6L11 11" stroke="#333" strokeWidth="2" /></svg>
                        <SliderTrack><SliderThumb /></SliderTrack>
                    </AudioSlider>
                </AudioMain>
                <Meter />
            </AudioBox>
            <Timer>00:00:47 / 187 KB</Timer>
        </Recorder>
    </Page>
)

export default App
